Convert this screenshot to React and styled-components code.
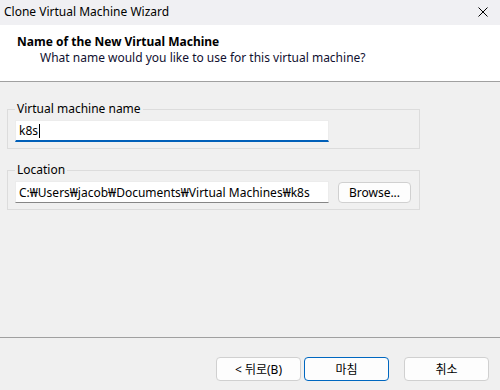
import React from 'react';
import styled, { createGlobalStyle } from 'styled-components';

const GlobalStyle = createGlobalStyle`
  html, body {
    margin: 0;
    padding: 0;
    background: #f0f0f0;
  }
  body {
    font-family: 'Noto Sans', 'Noto Sans CJK KR', sans-serif;
    font-size: 12px;
    color: #000;
  }
`;

const Window = styled.div`
  width: 500px;
  height: 390px;
  display: flex;
  flex-direction: column;
  background: #f0f0f0;
  overflow: hidden;
`;

const TitleBar = styled.div`
  height: 25px;
  flex: none;
  display: flex;
  align-items: center;
  justify-content: space-between;
  padding: 0 0 2px 4px;
  box-sizing: border-box;
  background: #f0f0f3;
  line-height: 16px;
`;

const CloseButton = styled.div`
  width: 30px;
  height: 25px;
  display: flex;
  align-items: center;
  justify-content: center;
  margin-right: 2px;
`;

const Header = styled.div`
  height: 57px;
  flex: none;
  box-sizing: border-box;
  background: #fff;
  padding: 9px 0 0 17px;
  border-bottom: 1px solid #a0a0a0;
  line-height: 16px;
`;

const HeaderTitle = styled.div`
  font-weight: 700;
`;

const HeaderSub = styled.div`
  padding-left: 23px;
  color: #101030;
`;

const Content = styled.div`
  flex: 1;
  display: flex;
  flex-direction: column;
  gap: 13px;
  padding: 19px 0 0 7px;
`;

const Group = styled.fieldset`
  width: 413px;
  box-sizing: border-box;
  margin: 0;
  border: 1px solid #dcdcdc;
  padding: 3px 7px 6px 7px;
  display: flex;
  align-items: center;
  gap: 9px;
`;

const Legend = styled.legend`
  padding: 0 2px;
  line-height: 16px;
`;

const TextBox = styled.div`
  width: 314px;
  height: 22px;
  box-sizing: border-box;
  background: #fff;
  border: 1px solid #ececec;
  border-bottom: ${p => (p.$focused ? '2px solid #005fb8' : '1px solid #868686')};
  padding: 0 3px;
  display: flex;
  align-items: center;
  white-space: nowrap;
  overflow: hidden;
  font-family: 'Noto Sans', 'Noto Sans CJK KR', sans-serif;
`;

const Caret = styled.span`
  display: inline-block;
  width: 1px;
  height: 14px;
  background: #000;
  margin-left: 1px;
`;

const Button = styled.button`
  height: ${p => p.$h || 24}px;
  width: ${p => p.$w || 85}px;
  box-sizing: border-box;
  background: #fdfdfd;
  border: 1px solid ${p => (p.$primary ? '#0067c0' : '#d0d0d0')};
  border-radius: 4px;
  font-family: 'Noto Sans', 'Noto Sans CJK KR', sans-serif;
  font-size: 12px;
  color: #000;
  padding: 0;
  cursor: default;
`;

const Footer = styled.div`
  height: 53px;
  flex: none;
  box-sizing: border-box;
  border-top: 1px solid #a0a0a0;
  display: flex;
  justify-content: flex-end;
  align-items: flex-start;
  padding: 19px 11px 0 0;
`;

const ButtonPair = styled.div`
  display: flex;
  gap: 3px;
  margin-right: 15px;
`;

export default function App() {
  return (
    <>
      <GlobalStyle />
      <Window>
        <TitleBar>
          <span>Clone Virtual Machine Wizard</span>
          <CloseButton>
            <svg width="10" height="10" viewBox="0 0 10 10">
              <path d="M0.5 0.5 L9.5 9.5 M9.5 0.5 L0.5 9.5" stroke="#000" strokeWidth="1" fill="none" />
            </svg>
          </CloseButton>
        </TitleBar>
        <Header>
          <HeaderTitle>Name of the New Virtual Machine</HeaderTitle>
          <HeaderSub>What name would you like to use for this virtual machine?</HeaderSub>
        </Header>
        <Content>
          <Group>
            <Legend>Virtual machine name</Legend>
            <TextBox $focused>
              k8s<Caret />
            </TextBox>
          </Group>
          <Group>
            <Legend>Location</Legend>
            <TextBox>C:₩Users₩jacob₩Documents₩Virtual Machines₩k8s</TextBox>
            <Button $w={73} $h={21}>Browse...</Button>
          </Group>
        </Content>
        <Footer>
          <ButtonPair>
            <Button>&lt; 뒤로(B)</Button>
            <Button $primary>마침</Button>
          </ButtonPair>
          <Button>취소</Button>
        </Footer>
      </Window>
    </>
  );
}
